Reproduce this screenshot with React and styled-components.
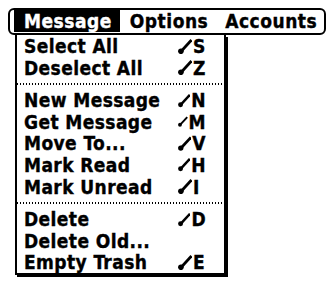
import React from "react";
import styled, { createGlobalStyle } from "styled-components";

const Global = createGlobalStyle`
  html, body { margin: 0; padding: 0; background: #fff; }
  body { font-family: "DejaVu Sans Condensed", "Liberation Sans", sans-serif; }
`;

const Screen = styled.div`
  width: 334px;
  height: 281px;
  padding: 8px 0 0 8px;
  box-sizing: border-box;
  background: #fff;
  color: #000;
  font-family: "DejaVu Sans Condensed", "Liberation Sans", sans-serif;
  font-weight: bold;
  font-size: 19px;
  -webkit-text-stroke: 0.35px #000;
`;

const MenuBar = styled.div`
  width: 318px;
  height: 27px;
  box-sizing: border-box;
  border: 2px solid #000;
  border-radius: 6px;
  display: flex;
  align-items: flex-start;
  padding: 0 0 0 4px;
`;

const Title = styled.div`
  height: 22px;
  line-height: 22px;
  padding: 0 ${(p) => (p.$active ? 8 : 7)}px 0 10px;
  letter-spacing: 0.5px;
  white-space: nowrap;
  background: ${(p) => (p.$active ? "#000" : "transparent")};
  color: ${(p) => (p.$active ? "#fff" : "#000")};
  -webkit-text-stroke: 0.35px ${(p) => (p.$active ? "#fff" : "#000")};
`;

const Dropdown = styled.div`
  margin-left: 7px;
  width: 211px;
  box-sizing: border-box;
  border: 2px solid #000;
  border-top: none;
  box-shadow: 2px 2px 0 #000;
  display: flex;
  flex-direction: column;
`;

const Item = styled.div`
  height: 21.6px;
  display: grid;
  grid-template-columns: 1fr 28px;
  align-items: center;
  padding: 0 18px 0 7px;
  letter-spacing: 0.4px;
  white-space: nowrap;
`;

const Shortcut = styled.span`
  display: flex;
  align-items: center;
  gap: 1px;
`;

const Separator = styled.div`
  height: 11px;
  display: flex;
  align-items: center;
  &::after {
    content: "";
    flex: 1;
    height: 2px;
    background-image: linear-gradient(to right, #000 50%, transparent 50%);
    background-size: 3px 2px;
  }
`;

const Stroke = () => (
  <svg width="14" height="15" viewBox="0 0 14 15">
    <line x1="3" y1="12.5" x2="13.5" y2="1" stroke="#000" strokeWidth="2.8" />
    <circle cx="2.9" cy="12.3" r="2.8" fill="#000" />
  </svg>
);

const groups = [
  [
    ["Select All", "S"],
    ["Deselect All", "Z"],
  ],
  [
    ["New Message", "N"],
    ["Get Message", "M"],
    ["Move To...", "V"],
    ["Mark Read", "H"],
    ["Mark Unread", "I"],
  ],
  [
    ["Delete", "D"],
    ["Delete Old...", null],
    ["Empty Trash", "E"],
  ],
];

export default function App() {
  return (
    <>
      <Global />
      <Screen>
        <MenuBar>
          <Title $active>Message</Title>
          <Title>Options</Title>
          <Title>Accounts</Title>
        </MenuBar>
        <Dropdown>
          {groups.map((g, gi) => (
            <React.Fragment key={gi}>
              {gi > 0 && <Separator />}
              {g.map(([label, key]) => (
                <Item key={label}>
                  <span>{label}</span>
                  {key ? (
                    <Shortcut>
                      <Stroke />
                      {key}
                    </Shortcut>
                  ) : (
                    <span />
                  )}
                </Item>
              ))}
            </React.Fragment>
          ))}
        </Dropdown>
      </Screen>
    </>
  );
}
